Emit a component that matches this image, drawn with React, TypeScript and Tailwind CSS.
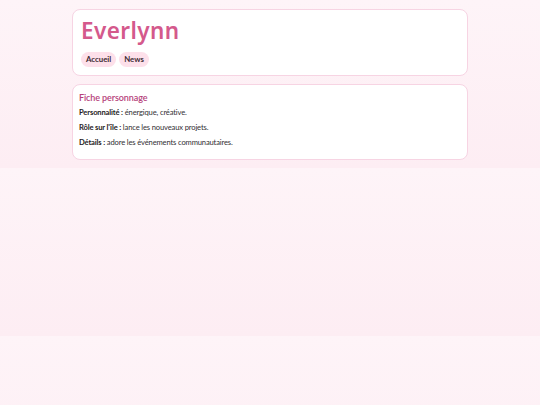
export default function App() {
  return (
    <div className="min-h-screen bg-[linear-gradient(180deg,#fef4f8_0%,#fdedf3_100%)] bg-[length:100%_168px] bg-repeat-y pt-[9px] font-['Lato','Open_Sans',sans-serif]">
      <div className="mx-auto flex w-[396px] flex-col gap-[8px]">
        <header className="rounded-[8px] border border-[#f7d4e3] bg-white px-[8px] pt-[6px] pb-[8px]">
          <h1 className="font-['Noto_Sans','Open_Sans',sans-serif] text-[22.5px] leading-[30px] font-semibold tracking-[0.4px] text-[#d4598c]">
            Everlynn
          </h1>
          <nav className="mt-[6px] flex gap-[3px]">
            <a className="rounded-full bg-[#fde0ea] px-[5px] text-[7.8px] leading-[15px] font-bold text-[#3e2a33]">Accueil</a>
            <a className="rounded-full bg-[#fde0ea] px-[5px] text-[7.8px] leading-[15px] font-bold text-[#3e2a33]">News</a>
          </nav>
        </header>
        <section className="rounded-[8px] border border-[#f7d4e3] bg-white px-[6px] pt-[6px] pb-[9px] text-[7.6px] tracking-[-0.15px] text-[#333033]">
          <h2 className="text-[9px] leading-[13px] font-semibold tracking-[-0.1px] text-[#b5417a]">Fiche personnage</h2>
          <p className="mt-[1px] leading-[15px]"><b className="text-[#262224]">Personnalité :</b> énergique, créative.</p>
          <p className="leading-[15px]"><b className="text-[#262224]">Rôle sur l'île :</b> lance les nouveaux projets.</p>
          <p className="leading-[15px]"><b className="text-[#262224]">Détails :</b> adore les événements communautaires.</p>
        </section>
      </div>
    </div>
  );
}
